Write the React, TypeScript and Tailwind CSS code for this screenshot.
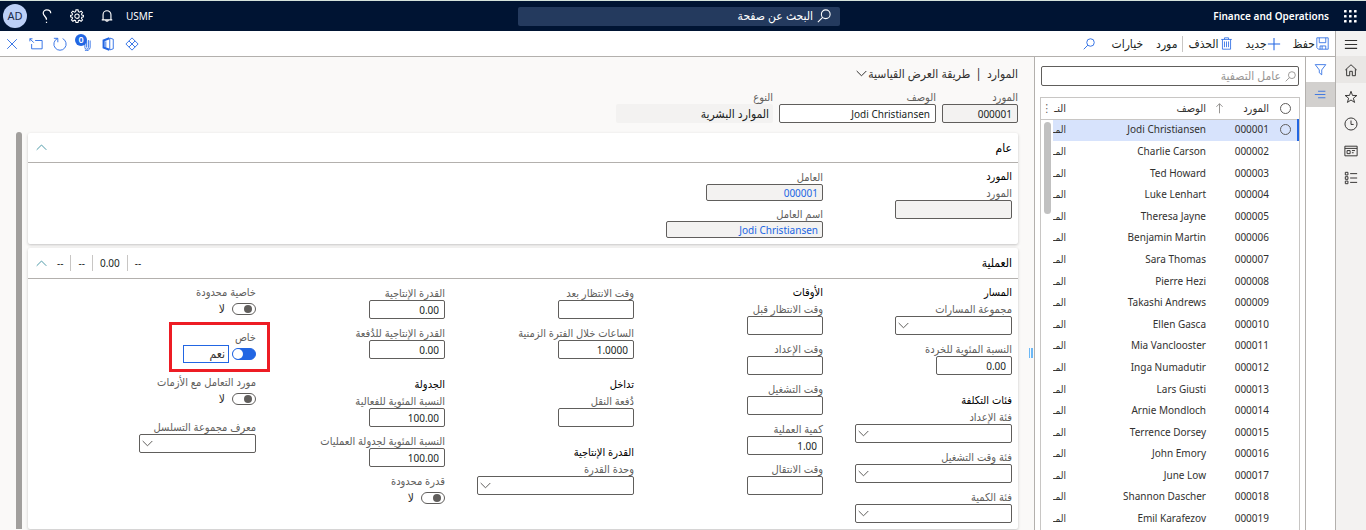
import { useState } from "react";
import type { ReactNode } from "react";

const resources: [string, string][] = [
  ["000001", "Jodi Christiansen"],
  ["000002", "Charlie Carson"],
  ["000003", "Ted Howard"],
  ["000004", "Luke Lenhart"],
  ["000005", "Theresa Jayne"],
  ["000006", "Benjamin Martin"],
  ["000007", "Sara Thomas"],
  ["000008", "Pierre Hezi"],
  ["000009", "Takashi Andrews"],
  ["000010", "Ellen Gasca"],
  ["000011", "Mia Vanclooster"],
  ["000012", "Inga Numadutir"],
  ["000013", "Lars Giusti"],
  ["000014", "Arnie Mondloch"],
  ["000015", "Terrence Dorsey"],
  ["000016", "John Emory"],
  ["000017", "June Low"],
  ["000018", "Shannon Dascher"],
  ["000019", "Emil Karafezov"],
];

function Icon({ size = 14, width = 1, className = "", children }: { size?: number; width?: number; className?: string; children: ReactNode }) {
  return (
    <svg width={size} height={size} viewBox="0 0 16 16" fill="none" stroke="currentColor" strokeWidth={width} className={`shrink-0 ${className}`} aria-hidden="true">
      {children}
    </svg>
  );
}

const SearchIcon = ({ size = 13, className = "" }) => (
  <Icon size={size} width={1.2} className={className}>
    <circle cx="10" cy="6" r="5" />
    <path d="M6.4 9.6 1 15" />
  </Icon>
);

const Chevron = ({ up = false, className = "" }) => (
  <svg width="11" height="7" viewBox="0 0 11 7" fill="none" stroke="currentColor" className={`shrink-0 ${className}`} aria-hidden="true">
    <path d={up ? "M.7 5.8 5.5 1l4.8 4.8" : "M.7 1l4.8 4.8L10.3 1"} />
  </svg>
);

type Size = "sm" | "md" | "lg";
const widths: Record<Size, string> = { sm: "w-[76px]", md: "w-[117px]", lg: "w-[157px]" };

function Label({ id, children }: { id: string; children: ReactNode }) {
  return (
    <label htmlFor={id} className="h-[14px] whitespace-nowrap text-[11px] leading-[14px] text-[#605e5c]">
      {children}
    </label>
  );
}

function Field({ id, label, value = "", size = "sm", kind = "edit" }: { id: string; label: string; value?: string; size?: Size; kind?: "edit" | "locked" | "link" | "plain" }) {
  const look = {
    edit: "h-[19px] border border-[#605e5c] bg-white px-[5px] text-[10px] text-[#201f1e]",
    locked: "h-[19px] border border-[#605e5c] bg-[#f3f2f1] px-[5px] text-[10px] text-[#201f1e]",
    link: "h-[17px] border border-[#605e5c] bg-[#f3f2f1] px-1 text-[10px] text-[#2266e3]",
    plain: "h-[19px] bg-[#f3f2f1] px-1 text-[12px] text-[#201f1e]",
  }[kind];
  return (
    <div className="flex flex-col items-start">
      <Label id={id}>{label}</Label>
      <input id={id} defaultValue={value} readOnly={kind !== "edit"} className={`${widths[size]} ${look} rounded-[2px] outline-none`} />
    </div>
  );
}

function Dropdown({ id, label, size }: { id: string; label: string; size: Size }) {
  return (
    <div className="flex flex-col items-start">
      <Label id={id}>{label}</Label>
      <div className="relative">
        <select id={id} className={`${widths[size]} block h-[19px] appearance-none rounded-[2px] border border-[#605e5c] bg-white px-1 text-[11px] outline-none`}>
          <option value=""></option>
        </select>
        <Chevron className="pointer-events-none absolute left-[3px] top-[6px] text-[#605e5c]" />
      </div>
    </div>
  );
}

function Toggle({ id, label, initial = false, marked = false }: { id: string; label: string; initial?: boolean; marked?: boolean }) {
  const [on, setOn] = useState(initial);
  return (
    <div className="relative flex flex-col items-start">
      <Label id={id}>{label}</Label>
      <div className="flex h-[19px] items-center gap-[3px]">
        <input
          id={id}
          type="checkbox"
          role="switch"
          checked={on}
          onChange={(e) => setOn(e.target.checked)}
          className="flex h-3 w-6 appearance-none items-center rounded-full border border-[#605e5c] bg-white px-[3px] before:size-2 before:rounded-full before:bg-[#605e5c] checked:justify-end checked:border-[#2266e3] checked:bg-[#2266e3] checked:px-0 checked:before:size-[10px] checked:before:bg-white"
        />
        <span className={`flex items-center text-[12px] leading-4 text-[#323130] ${marked ? "h-[18px] w-[46px] border border-[#2266e3] px-[3px]" : "px-1"}`}>{on ? "نعم" : "لا"}</span>
      </div>
      {marked && <div className="pointer-events-none absolute -right-[14px] -top-2 h-[50px] w-[101px] border-[3px] border-[#ed1c24]" />}
    </div>
  );
}

const Heading = ({ children }: { children: ReactNode }) => (
  <h3 className="whitespace-nowrap text-[11px] leading-4 text-black">{children}</h3>
);

function Column({ children, className = "" }: { children: ReactNode; className?: string }) {
  return <div className={`flex w-[189px] flex-col gap-[17px] ${className}`}>{children}</div>;
}

const Stack = ({ children, className = "gap-[7px]" }: { children: ReactNode; className?: string }) => <div className={`flex flex-col ${className}`}>{children}</div>;

function Section({ title, children }: { title: string; children: ReactNode }) {
  return (
    <section className="flex flex-col gap-[2px]">
      <Heading>{title}</Heading>
      <Stack>{children}</Stack>
    </section>
  );
}

function Card({ title, summary = [], children }: { title: string; summary?: string[]; children: ReactNode }) {
  return (
    <section className="rounded-[2px] bg-white shadow-[0_1px_3px_rgba(0,0,0,0.22)]">
      <header className={`flex items-center border-b border-[#b3b0ad] ps-[6px] pe-2 ${summary.length > 0 ? "h-[31px]" : "h-[30px]"}`}>
        <h2 className="flex-1 text-[12px] text-black">{title}</h2>
        <div className="flex items-center text-[10px] text-[#201f1e]">
          {summary.map((item, i) => (
            <span key={i} className={`flex h-4 items-center px-[7px] ${i > 0 ? "border-s border-[#c8c6c4]" : ""}`}>
              {item}
            </span>
          ))}
        </div>
        <button aria-label="طي" className="ms-[3px] text-[#4f9aa8]">
          <Chevron up />
        </button>
      </header>
      <div className="flex ps-[6px]">{children}</div>
    </section>
  );
}

const navIcons: { label: string; icon: ReactNode }[] = [
  { label: "الصفحة الرئيسية", icon: <Icon width={1.1}><path d="M1.5 8 8 2l6.500 6M3 7v7.500h3.500V9.500h3v5H13V7" /></Icon> },
  { label: "المفضلة", icon: <Icon width={1.1}><path d="m8 1.500 1.700 4.700 5 .100-4 3.100 1.400 4.800L8 11.400l-4.100 2.800 1.400-4.800-4-3.100 5-.100z" /></Icon> },
  { label: "الأخيرة", icon: <Icon width={1.1}><circle cx="8" cy="8" r="6.900" /><path d="M8 4v4.500h3" /></Icon> },
  { label: "مساحات العمل", icon: <Icon width={1.1}><path d="M1 2.500h14v11H1zM1 5h14M3.500 7.500H7V11H3.500zM9 7.500h3.500M9 10h2" /></Icon> },
  { label: "الوحدات النمطية", icon: <Icon width={1.1}><path d="M1.500 1.500h3v3h-3zM1.500 6.500h3v3h-3zM1.500 11.500h3v3h-3zM7 3h8M7 8h8M7 13h8" /></Icon> },
];

function TopBar() {
  return (
    <header className="grid h-[31px] shrink-0 grid-cols-[1fr_322px_1fr] items-center border-t border-[#d5e3dc] bg-[#001433] ps-2 text-white">
      <div className="flex items-center gap-[15px] ps-px">
        <button aria-label="التطبيقات">
          <svg width="13" height="13" viewBox="0 0 13 13" fill="currentColor" aria-hidden="true">
            {[0, 5, 10].map((y) => [0, 5, 10].map((x) => <rect key={`${x}-${y}`} x={x} y={y} width="2.600" height="2.600" rx=".6" />))}
          </svg>
        </button>
        <span className="whitespace-nowrap text-[10px] font-semibold" dir="ltr">Finance and Operations</span>
      </div>
      <label className="flex h-[19px] items-center gap-1 rounded-[2px] bg-[#243a5e] ps-[9px]">
        <SearchIcon size={14} />
        <input placeholder="البحث عن صفحة" aria-label="البحث عن صفحة" className="min-w-0 flex-1 bg-transparent text-[12px] outline-none placeholder:text-white" />
      </label>
      <div className="flex items-center justify-end pe-[3px]">
        <span className="text-[10px]">USMF</span>
        <button aria-label="الإشعارات" className="ms-3">
          <Icon size={14} width={1.300}><path d="M2 12.500h12M3.500 12.500V6.500a4.500 4.500 0 0 1 9 0v6M6.500 13a1.600 1.600 0 0 0 3 0" /></Icon>
        </button>
        <button aria-label="الإعدادات" className="ms-4">
          <Icon size={14} width={1.200}>
            <path d="m6.800 1-.4 2-1.300.6-1.800-1.200-1.600 1.600 1.200 1.800-.5 1.200-2 .4v1.600l2 .4.5 1.200-1.200 1.800 1.600 1.600 1.800-1.200 1.300.6.4 2h2.400l.4-2 1.300-.6 1.800 1.200 1.600-1.600-1.200-1.800.5-1.200 2-.4V7.400l-2-.4-.5-1.200 1.200-1.800-1.600-1.600-1.800 1.200-1.300-.6-.4-2z" />
            <circle cx="8" cy="8.200" r="2.500" />
          </Icon>
        </button>
        <button aria-label="تعليمات" className="ms-4">
          <Icon size={15} width={1.300}><path d="M12.500 4.500C12.500 2.300 10.500 1 8.300 1S4.500 2.500 4.500 4.600C4.500 7.500 8 7.500 8 11.500M8 13.500V15" /></Icon>
        </button>
        <button className="ms-3 size-6 rounded-full bg-[#bcd0f7] text-[11px] text-[#1b2a49]">AD</button>
      </div>
    </header>
  );
}

function ActionBar() {
  return (
    <div className="flex h-[26px] shrink-0 items-center border-b border-[#b3b0ad] bg-white ps-[6px] pe-[5px] text-[12px] text-[#201f1e]">
      <button className="flex items-center gap-px">
        <Icon size={13} className="text-[#2266e3]"><path d="M1 1h14v14H3l-2-2zM4 1v6h8V1M5 15v-4h7v4M7.500 11v4" /></Icon>
        حفظ
      </button>
      <button className="ms-3 flex items-center">
        <Icon size={14} width={1.200} className="text-[#2266e3]"><path d="M8 1v14M1 8h14" /></Icon>
        جديد
      </button>
      <button className="ms-[13px] flex items-center gap-px">
        <Icon size={13} className="text-[#2266e3]"><path d="M1.500 3h13M5.500 3V1h5v2M3 3v12h10V3M5.500 5.500v7M8 5.500v7M10.500 5.500v7" /></Icon>
        الحذف
      </button>
      <span className="mx-[5px] h-4 w-px bg-[#c8c6c4]" />
      <button>مورد</button>
      <button className="ms-[13px]">خيارات</button>
      <button aria-label="بحث" className="ms-4 text-[#2266e3]"><SearchIcon size={12} /></button>
      <div className="ms-auto flex items-center gap-[10px] text-[#2266e3]">
        <button aria-label="Power Apps">
          <Icon><path d="M8 1 1 8l7 7 7-7zM4.500 4.500l7 7M11.500 4.500l-7 7" /></Icon>
        </button>
        <button aria-label="Office">
          <Icon><path d="M9.500 1.500 3 4v8l6.500 2.500" strokeWidth="2.400" /><path d="M10 1.200 14 2.500v11l-4 1.300zM5.500 5v6.500" /></Icon>
        </button>
        <button aria-label="المرفقات" className="relative">
          <Icon><path d="M9 4v8a2 2 0 0 0 4 0V3.500M11 5v7M15 4v8a4 4 0 0 1-6 3" /></Icon>
          <span className="absolute -left-[2px] -top-[3px] flex size-3 items-center justify-center rounded-full bg-[#2266e3] text-[9px] font-semibold leading-none text-white">0</span>
        </button>
        <button aria-label="تحديث">
          <Icon><path d="M5 1.800a7 7 0 1 0 6 0M1 1.500h4.500V6" /></Icon>
        </button>
        <button aria-label="فتح في نافذة جديدة">
          <Icon><path d="M7 4h8v9.500H3V8M5.500 6.500 1 2M1 5V2h3" /></Icon>
        </button>
        <button aria-label="إغلاق">
          <Icon><path d="m2.500 2.500 11 11M13.500 2.500l-11 11" /></Icon>
        </button>
      </div>
    </div>
  );
}

function ListPane() {
  return (
    <aside className="flex w-[270px] shrink-0 flex-col bg-white px-[5px] pt-[9px]">
      <label className="mx-px flex h-5 items-center gap-1 rounded-[2px] border border-[#605e5c] px-[2px] text-[#8a8886]">
        <SearchIcon size={11} />
        <input placeholder="عامل التصفية" aria-label="عامل التصفية" className="min-w-0 flex-1 bg-transparent text-[12px] outline-none placeholder:text-[#979593]" />
      </label>
      <div className="relative mt-[11px] min-h-0 flex-1 border border-b-0 border-[#c8c6c4]">
        <table className="h-full w-full table-fixed border-collapse text-[10px] leading-4 text-[#323130]">
          <thead>
            <tr className="h-[21px] border-b border-[#c8c6c4]">
              <th className="w-[25px]">
                <input type="checkbox" aria-label="تحديد الكل" className="mx-auto block size-[11px] appearance-none rounded-full border border-[#605e5c]" />
              </th>
              <th className="w-[63px] ps-1 text-start text-[11px] font-normal">
                <span className="flex items-center justify-between pe-1">
                  المورد
                  <Icon size={11} width={1.300} className="text-[#8a8886]"><path d="M8 15V1M3.500 5.500 8 1l4.500 4.500" /></Icon>
                </span>
              </th>
              <th className="w-[140px] ps-1 text-start text-[11px] font-normal">الوصف</th>
              <th className="w-[17px] overflow-hidden whitespace-nowrap ps-1 text-start text-[11px] font-normal">النـ</th>
              <th className="text-[11px] font-normal text-[#605e5c]">⋮</th>
            </tr>
          </thead>
          <tbody>
            {resources.map(([id, name], i) => (
              <tr key={id}>
                <td className={`pb-[2px] ${i === 0 ? "border-s-2 border-[#2266e3] bg-[#d7e3fc]" : ""}`}>
                  {i === 0 && <input type="radio" name="row" aria-label={name} className="mx-auto block size-[11px] appearance-none rounded-full border border-[#605e5c]" />}
                </td>
                <td className={`pb-[2px] ps-1 ${i === 0 ? "bg-[#d7e3fc]" : ""}`}>{id}</td>
                <td className={`pb-[2px] ps-1 ${i === 0 ? "bg-[#d7e3fc]" : ""}`}>{name}</td>
                <td className={`overflow-hidden whitespace-nowrap pb-[2px] ps-1 ${i === 0 ? "bg-[#d7e3fc]" : ""}`}>المـ</td>
                <td></td>
              </tr>
            ))}
          </tbody>
        </table>
        <div className="absolute left-[3px] top-6 h-[92px] w-[7px] rounded-full bg-[#c1c1c1]" />
      </div>
    </aside>
  );
}

function FormPane() {
  return (
    <main className="relative min-w-0 flex-1 border-s border-[#b3b0ad] bg-[#faf9f8] ps-4">
      <div className="absolute right-px top-[291px] flex gap-px">
        <span className="h-[10px] w-[2px] bg-[#6cb8f6]" />
        <span className="h-[10px] w-px bg-[#6cb8f6]" />
      </div>
      <div className="flex h-[33px] items-center gap-[5px] text-[12px] text-[#323130]">
        <h1>الموارد</h1>
        <span>|</span>
        <button className="flex items-center gap-px">
          طريقة العرض القياسية
          <Chevron />
        </button>
      </div>
      <div className="flex gap-[6px]">
        <Field id="res" label="المورد" value="000001" kind="locked" />
        <Field id="desc" label="الوصف" value="Jodi Christiansen" size="lg" />
        <Field id="type" label="النوع" value="الموارد البشرية" size="lg" kind="plain" />
      </div>
      <div className="mt-[10px] flex pe-4">
        <div className="flex min-w-0 flex-1 flex-col gap-1 pe-[6px]">
          <Card title="عام">
            <Column className="pb-[25px] pt-[5px]">
              <Section title="المورد">
                <Field id="g-res" label="المورد" size="md" kind="locked" />
              </Section>
            </Column>
            <Column className="pb-[6px] pt-[7px]">
              <Stack className="gap-[6px]">
                <Field id="worker" label="العامل" value="000001" size="md" kind="link" />
                <Field id="worker-name" label="اسم العامل" value="Jodi Christiansen" size="lg" kind="link" />
              </Stack>
            </Column>
          </Card>
          <Card title="العملية" summary={["--", "0.00", "--", "--"]}>
            <Column className="pb-[6px] pt-[5px]">
              <Section title="المسار">
                <Dropdown id="route" label="مجموعة المسارات" size="md" />
                <Field id="scrap" label="النسبة المئوية للخردة" value="0.00" />
              </Section>
              <Section title="فئات التكلفة">
                <Dropdown id="setup-cat" label="فئة الإعداد" size="lg" />
                <Dropdown id="run-cat" label="فئة وقت التشغيل" size="lg" />
                <Dropdown id="qty-cat" label="فئة الكمية" size="lg" />
              </Section>
            </Column>
            <Column className="pt-[5px]">
              <Section title="الأوقات">
                <Field id="queue-before" label="وقت الانتظار قبل" />
                <Field id="setup" label="وقت الإعداد" />
                <Field id="run" label="وقت التشغيل" />
                <Field id="qty" label="كمية العملية" value="1.00" />
                <Field id="transit" label="وقت الانتقال" />
              </Section>
            </Column>
            <Column className="pt-[7px]">
              <Stack>
                <Field id="queue-after" label="وقت الانتظار بعد" />
                <Field id="hours" label="الساعات خلال الفترة الزمنية" value="1.0000" />
              </Stack>
              <Section title="تداخل">
                <Field id="batch" label="دُفعة النقل" />
              </Section>
              <Section title="القدرة الإنتاجية">
                <Dropdown id="unit" label="وحدة القدرة" size="lg" />
              </Section>
            </Column>
            <Column className="pt-[7px]">
              <Stack>
                <Field id="cap" label="القدرة الإنتاجية" value="0.00" />
                <Field id="batch-cap" label="القدرة الإنتاجية للدُفعة" value="0.00" />
              </Stack>
              <Section title="الجدولة">
                <Field id="eff" label="النسبة المئوية للفعالية" value="100.00" />
                <Field id="sched" label="النسبة المئوية لجدولة العمليات" value="100.00" />
                <Toggle id="finite" label="قدرة محدودة" />
              </Section>
            </Column>
            <Column className="pt-[6px]">
              <Stack className="gap-3">
                <Toggle id="finite-prop" label="خاصية محدودة" />
                <Toggle id="exclusive" label="خاص" initial marked />
                <Toggle id="bottleneck" label="مورد التعامل مع الأزمات" />
                <Dropdown id="seq" label="معرف مجموعة التسلسل" size="md" />
              </Stack>
            </Column>
          </Card>
        </div>
        <div className="-mt-px w-[6px] shrink-0 rounded-t-full bg-[#a19f9d]" />
      </div>
    </main>
  );
}

export default function App() {
  return (
    <div dir="rtl" lang="ar" className="flex h-screen flex-col overflow-hidden bg-white font-['Noto_Sans','DejaVu_Sans_Condensed','DejaVu_Sans',sans-serif]">
      <TopBar />
      <div className="flex min-h-0 flex-1">
        <nav className="flex w-[31px] shrink-0 flex-col border-e border-[#b3b0ad] bg-[#f3f2f1] text-[#323130]">
          <button aria-label="القائمة" className="flex h-[25px] items-center justify-center">
            <Icon width={1.200}><path d="M1 4h14M1 8.500h14M1 13h14" /></Icon>
          </button>
          {navIcons.map(({ label, icon }, i) => (
            <a key={label} href="#" aria-label={label} className={`flex h-[27px] items-center justify-center ${i === 0 ? "bg-[#e9e7e5]" : ""}`}>
              {icon}
            </a>
          ))}
        </nav>
        <div className="flex min-w-0 flex-1 flex-col">
          <ActionBar />
          <div className="flex min-h-0 flex-1">
            <div className="flex w-[30px] shrink-0 flex-col border-e border-[#b3b0ad] text-[#2266e3]">
              <button aria-label="تصفية" className="flex h-[25px] items-center justify-center">
                <Icon size={13}><path d="M1.500 2h13L9.500 8.500v6l-3-2.500V8.500z" /></Icon>
              </button>
              <button aria-label="قائمة" className="flex h-[25px] items-center justify-center bg-[#d2d0ce]">
                <Icon size={13}><path d="M5 4h9M1 8h13M5 12h9" /></Icon>
              </button>
            </div>
            <ListPane />
            <FormPane />
          </div>
        </div>
      </div>
    </div>
  );
}
